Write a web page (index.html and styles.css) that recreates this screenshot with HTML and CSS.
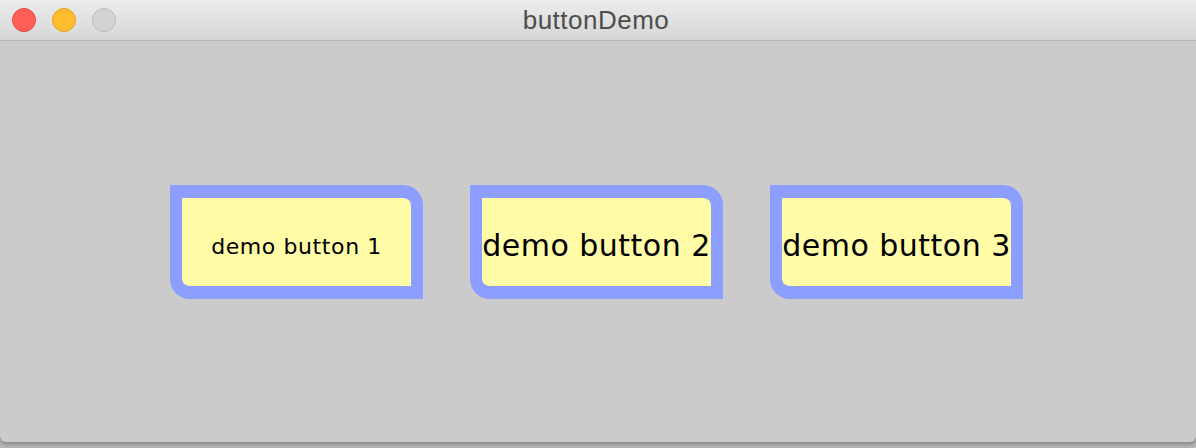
FILE: index.html
```html
<!DOCTYPE html>
<html>
<head>
<meta charset="utf-8">
<link rel="stylesheet" href="styles.css">
</head>
<body>
<div class="window">
  <div class="titlebar">
    <div class="lights">
      <span class="light red"></span>
      <span class="light yellow"></span>
      <span class="light gray"></span>
    </div>
    <div class="title">buttonDemo</div>
  </div>
  <div class="content">
    <button class="demo small">demo button 1</button>
    <button class="demo large">demo button 2</button>
    <button class="demo large">demo button 3</button>
  </div>
</div>
</body>
</html>
```

FILE: styles.css
```css
html, body {
  margin: 0;
  padding: 0;
  background: #b9b9b9;
  width: 1196px;
  height: 448px;
  overflow: hidden;
}
.window {
  width: 1196px;
  height: 442px;
  background: #cbcbcb;
  border-radius: 0 0 6px 6px;
  box-shadow: 0 1px 0 #8f8f8f, 0 3px 4px rgba(0,0,0,0.25);
  display: flex;
  flex-direction: column;
  overflow: hidden;
}
.titlebar {
  position: relative;
  height: 40px;
  flex: none;
  background: linear-gradient(#ececec, #d6d6d6);
  border-bottom: 1px solid #b8b8b8;
  display: flex;
  align-items: center;
  justify-content: center;
}
.lights {
  position: absolute;
  left: 12px;
  top: 8px;
  display: flex;
  gap: 16px;
}
.light {
  width: 22px;
  height: 22px;
  border-radius: 50%;
  border: 1px solid;
  display: block;
}
.red { background: #ff5f57; border-color: #e2463f; }
.yellow { background: #ffbd2e; border-color: #e1a116; }
.gray { background: #d3d3d3; border-color: #bcbcbc; }
.title {
  font-family: "Liberation Sans", Arial, sans-serif;
  font-size: 26px;
  letter-spacing: 0.5px;
  color: #4d4d4d;
  margin-top: 1px;
  margin-right: 4px;
}
.content {
  flex: 1;
  display: flex;
  align-items: center;
  justify-content: center;
  gap: 47px;
  padding-right: 3px;
}
.demo {
  width: 253px;
  height: 114px;
  box-sizing: border-box;
  margin: 0;
  padding: 0;
  background: #fffba6;
  border: 12px solid #8c9eff;
  border-top-width: 13px;
  border-bottom-width: 13px;
  border-radius: 0 20px 0 20px;
  color: #000;
  font-family: "DejaVu Sans", "Lucida Grande", sans-serif;
  display: flex;
  align-items: center;
  justify-content: center;
  white-space: nowrap;
  overflow: visible;
}
.small {
  font-size: 22px;
  letter-spacing: 0.6px;
  padding-top: 9px;
}
.large {
  font-size: 30px;
  letter-spacing: 0.5px;
  padding-top: 8px;
}
```
